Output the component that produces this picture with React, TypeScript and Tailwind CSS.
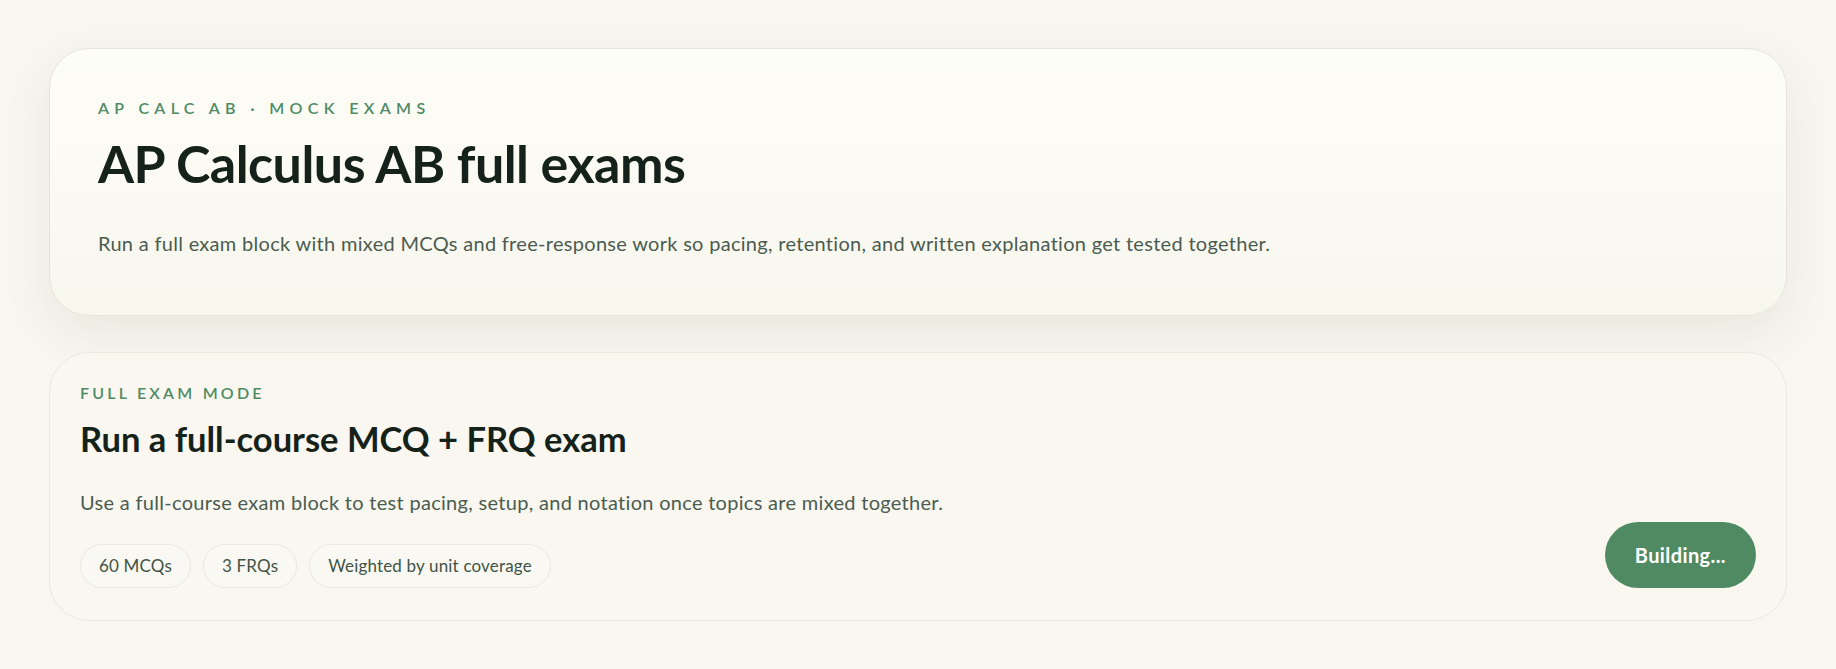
export default function App() {
  const chips = ["60 MCQs", "3 FRQs", "Weighted by unit coverage"];

  return (
    <div
      className="min-h-screen bg-[#f8f6ef] px-[49px] pt-12 pb-12"
      style={{ fontFamily: "Lato, 'Noto Sans', sans-serif" }}
    >
      {/* Hero card */}
      <section className="rounded-[40px] border border-[#e6e5d9] bg-gradient-to-b from-[#fdfdf7] to-[#f8f7ee] px-12 pt-[49px] pb-[58px] shadow-[0_18px_48px_rgba(70,70,40,0.08)]">
        <p className="text-[16px] leading-5 font-semibold uppercase tracking-[0.335em] text-[#4e8a63]">
          AP Calc AB · Mock exams
        </p>
        <h1 className="mt-[17px] text-[52px] leading-[1.1] font-bold tracking-[-0.01em] text-[#15221a]">
          AP Calculus AB full exams
        </h1>
        <p className="mt-[37px] text-[20px] leading-7 tracking-[0.015em] text-[#4b5c50]">
          Run a full exam block with mixed MCQs and free-response work so pacing, retention, and written explanation get tested together.
        </p>
      </section>

      {/* Full exam mode card */}
      <section className="mt-[36px] rounded-[40px] border border-[#ebe8de] bg-[#f9f7f0] px-[30px] pt-[30px] pb-[32px]">
        <p className="text-[16px] leading-5 font-semibold uppercase tracking-[0.2em] text-[#4e8a63]">
          Full exam mode
        </p>
        <h2 className="mt-[15px] text-[34.5px] leading-[1.2] font-bold text-[#15221a]">
          Run a full-course MCQ + FRQ exam
        </h2>
        <p className="mt-[28px] text-[20px] leading-7 tracking-[0.015em] text-[#4b5c50]">
          Use a full-course exam block to test pacing, setup, and notation once topics are mixed together.
        </p>
        <div className="mt-[6px] flex items-end justify-between">
          <div className="flex gap-3">
            {chips.map((c) => (
              <span
                key={c}
                className="flex h-[44px] items-center rounded-full border border-[#ebe8de] bg-[#faf8f2] px-[18px] text-[17px] tracking-[0.01em] text-[#3f5446]"
              >
                {c}
              </span>
            ))}
          </div>
          <button className="h-[66px] rounded-full bg-[#4f8a63] px-[30px] text-[20px] font-bold tracking-[0.02em] text-white">
            Building...
          </button>
        </div>
      </section>
    </div>
  );
}
